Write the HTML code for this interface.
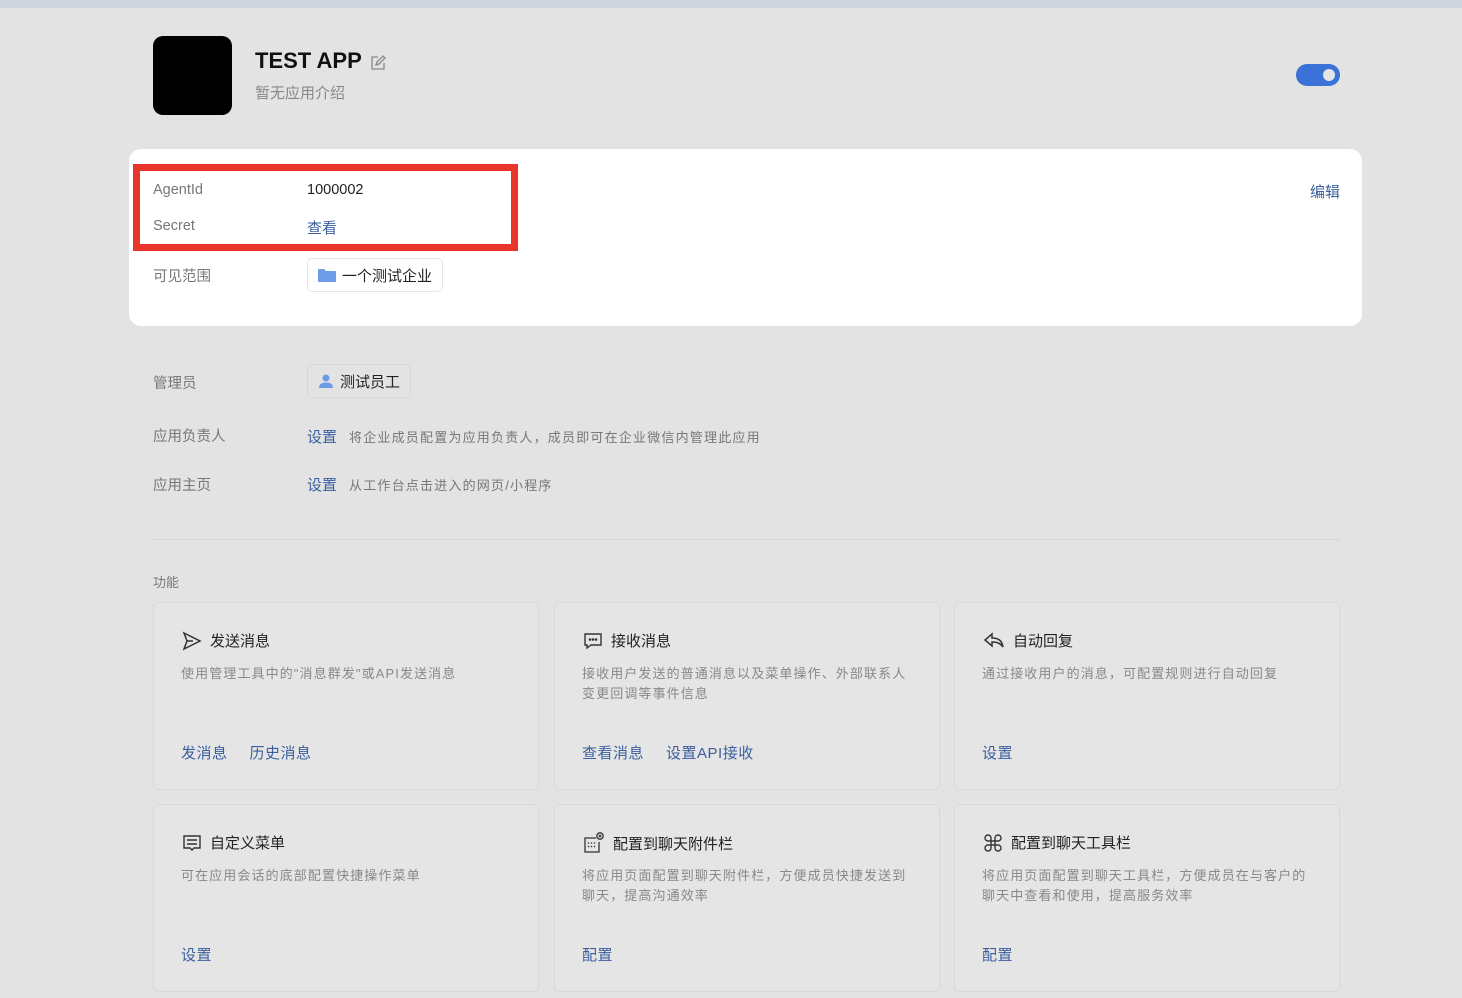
<!DOCTYPE html>
<html><head><meta charset="utf-8"><style>
*{margin:0;padding:0;box-sizing:border-box}
body{width:1462px;height:998px;background:#e3e3e3;font-family:"Liberation Sans","Noto Sans CJK SC",sans-serif;position:relative;overflow:hidden;color:#333}
.a{position:absolute;white-space:nowrap}
.lab{font-size:14.5px;color:#777}
.link{color:#3b5f9e}
.card{position:absolute;width:386px;height:188px;border:1px solid #d9d9d9;border-radius:6px;background:#e5e5e5}
.card .t{position:absolute;left:28px;top:27px;font-size:15px;color:#222;display:flex;align-items:center;gap:8px}
.card .d{position:absolute;left:27px;top:61px;font-size:13px;letter-spacing:1.1px;color:#888;line-height:20px;width:334px;white-space:normal}
.card .l{position:absolute;left:27px;top:139px;font-size:15px;color:#3b5f9e;letter-spacing:.5px}
.card .l span{margin-right:22px}
.tag{position:absolute;height:34px;border:1px solid #d8d8d8;border-radius:5px;font-size:15px;display:flex;align-items:center;padding:0 10px;gap:6px;color:#222}
.desc{font-size:13px;letter-spacing:1.2px;color:#777}
</style></head><body>
<div class="a" style="left:0;top:0;width:1462px;height:8px;background:#d0d6df"></div>
<div class="a" style="left:153px;top:36px;width:79px;height:79px;background:#000;border-radius:10px"></div>
<div class="a" style="left:255px;top:48px;font-size:22px;font-weight:bold;color:#111">TEST APP</div>
<svg class="a" style="left:370px;top:55px" width="16" height="16" viewBox="0 0 16 16" fill="none" stroke="#888" stroke-width="1.3"><path d="M8 2H2v12h12V8"/><path d="M6 10l1-3 6-6 2 2-6 6z"/></svg>
<div class="a" style="left:255px;top:82px;font-size:15px;color:#888">暂无应用介绍</div>
<div class="a" style="left:1296px;top:64px;width:44px;height:22px;border-radius:11px;background:#3a72d8"></div>
<div class="a" style="left:1323px;top:69px;width:12px;height:12px;border-radius:6px;background:#e5e5e5"></div>

<div class="a" style="left:129px;top:149px;width:1233px;height:177px;background:#fff;border-radius:12px"></div>
<div class="a" style="left:133px;top:164px;width:385px;height:87px;border:7px solid #e8342a"></div>
<div class="a lab" style="left:153px;top:182px">AgentId</div>
<div class="a" style="left:307px;top:182px;font-size:14.5px;color:#222">1000002</div>
<div class="a lab" style="left:153px;top:218px">Secret</div>
<div class="a link" style="left:307px;top:217px;font-size:15px">查看</div>
<div class="a link" style="left:1310px;top:181px;font-size:15px">编辑</div>
<div class="a lab" style="left:153px;top:265px">可见范围</div>
<div class="tag" style="left:307px;top:258px;background:#fff;border-color:#e6e6e6"><svg width="18" height="14" viewBox="0 0 18 14"><path d="M0 2a1 1 0 0 1 1-1h5l2 2h9a1 1 0 0 1 1 1v9a1 1 0 0 1-1 1H1a1 1 0 0 1-1-1z" fill="#6d9be6"/></svg>一个测试企业</div>

<div class="a lab" style="left:153px;top:372px">管理员</div>
<div class="tag" style="left:307px;top:364px"><svg width="16" height="16" viewBox="0 0 16 16" fill="#6d9be6"><circle cx="8" cy="5" r="3.5"/><path d="M1 15c0-4 3-5.5 7-5.5s7 1.5 7 5.5z"/></svg>测试员工</div>
<div class="a lab" style="left:153px;top:425px">应用负责人</div>
<div class="a link" style="left:307px;top:426px;font-size:15px">设置</div>
<div class="a desc" style="left:349px;top:427px">将企业成员配置为应用负责人，成员即可在企业微信内管理此应用</div>
<div class="a lab" style="left:153px;top:474px">应用主页</div>
<div class="a link" style="left:307px;top:474px;font-size:15px">设置</div>
<div class="a desc" style="left:349px;top:475px">从工作台点击进入的网页/小程序</div>
<div class="a" style="left:153px;top:539px;width:1187px;height:1px;background:#d6d6d6"></div>
<div class="a" style="left:153px;top:572px;font-size:13px;color:#777">功能</div>

<div class="card" style="left:153px;top:602px"><div class="t"><svg width="20" height="20" viewBox="0 0 20 20" fill="none" stroke="#333" stroke-width="1.5"><path d="M2 2l16 8-16 8 3-8z"/><path d="M5 10h6"/></svg>发送消息</div><div class="d">使用管理工具中的"消息群发"或API发送消息</div><div class="l"><span>发消息</span><span>历史消息</span></div></div>
<div class="card" style="left:554px;top:602px"><div class="t"><svg width="20" height="20" viewBox="0 0 20 20" fill="none" stroke="#333" stroke-width="1.4"><path d="M2 3h16v11H8l-4 3v-3H2z"/><circle cx="7" cy="8.5" r=".6" fill="#333"/><circle cx="10" cy="8.5" r=".6" fill="#333"/><circle cx="13" cy="8.5" r=".6" fill="#333"/></svg>接收消息</div><div class="d">接收用户发送的普通消息以及菜单操作、外部联系人变更回调等事件信息</div><div class="l"><span>查看消息</span><span>设置API接收</span></div></div>
<div class="card" style="left:954px;top:602px"><div class="t"><svg width="22" height="20" viewBox="0 0 22 20" fill="none" stroke="#333" stroke-width="1.5"><path d="M9 3L2 9l7 6v-4c5 0 8 1 11 5-1-6-4-9-11-9z"/></svg>自动回复</div><div class="d">通过接收用户的消息，可配置规则进行自动回复</div><div class="l"><span>设置</span></div></div>
<div class="card" style="left:153px;top:804px"><div class="t"><svg width="20" height="20" viewBox="0 0 20 20" fill="none" stroke="#333" stroke-width="1.4"><path d="M2 3h16v12h-6l-2 2-2-2H2z"/><path d="M5 7h10M5 11h10"/></svg>自定义菜单</div><div class="d">可在应用会话的底部配置快捷操作菜单</div><div class="l"><span>设置</span></div></div>
<div class="card" style="left:554px;top:804px"><div class="t"><svg width="22" height="22" viewBox="0 0 22 22" fill="none" stroke="#333" stroke-width="1.3"><path d="M13 6H2v14h14V10"/><circle cx="17" cy="4" r="3.2"/><path d="M17 2.5v3M15.5 4h3"/><g fill="#333" stroke="none"><circle cx="5.5" cy="11" r=".8"/><circle cx="8.5" cy="11" r=".8"/><circle cx="11.5" cy="11" r=".8"/><circle cx="5.5" cy="14.5" r=".8"/><circle cx="8.5" cy="14.5" r=".8"/><circle cx="11.5" cy="14.5" r=".8"/></g></svg>配置到聊天附件栏</div><div class="d">将应用页面配置到聊天附件栏，方便成员快捷发送到聊天，提高沟通效率</div><div class="l"><span>配置</span></div></div>
<div class="card" style="left:954px;top:804px"><div class="t"><svg width="20" height="20" viewBox="0 0 20 20" fill="none" stroke="#333" stroke-width="1.4"><path d="M8 8H5a3 3 0 1 1 3-3zM12 8h3a3 3 0 1 0-3-3zM8 12H5a3 3 0 1 0 3 3zM12 12h3a3 3 0 1 1-3 3zM8 8h4v4H8z"/></svg>配置到聊天工具栏</div><div class="d">将应用页面配置到聊天工具栏，方便成员在与客户的聊天中查看和使用，提高服务效率</div><div class="l"><span>配置</span></div></div>
</body></html>
